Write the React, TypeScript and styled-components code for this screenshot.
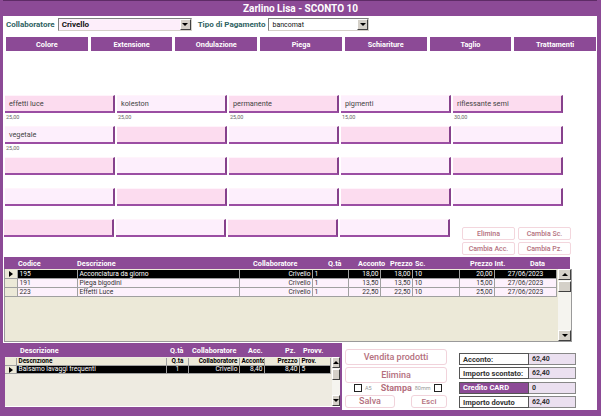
import React from 'react';
import styled, { createGlobalStyle } from 'styled-components';

const PURPLE = '#8c4a96';
const ROSE = '#b4707e';
const BEIGE = '#ece9d8';

const GlobalStyle = createGlobalStyle`
  html, body { margin: 0; padding: 0; background: #fff; }
  body { font-family: Roboto, "Liberation Sans", Arial, sans-serif; }
  * { box-sizing: border-box; }
`;

const Window = styled.div`
  width: 601px;
  height: 416px;
  display: flex;
  flex-direction: column;
  background: #fff;
  border: solid ${PURPLE};
  border-width: 0 4px 6px 3px;
  overflow: hidden;
`;

const TitleBar = styled.div`
  height: 16px;
  margin: 0 -4px 0 -3px;
  background: ${PURPLE};
  border-top: 1px solid #5e2b66;
  color: #fff;
  font-size: 10px;
  font-weight: 700;
  display: flex;
  align-items: center;
  justify-content: center;
`;

const FieldRow = styled.div`
  display: flex;
  align-items: center;
  height: 15px;
  margin-top: 1px;
  padding-left: 3px;
`;

const FieldLabel = styled.span<{ $gap?: number }>`
  font-size: 8px;
  font-weight: 700;
  color: #2f6262;
  margin-left: ${(p) => p.$gap ?? 0}px;
  margin-right: 3px;
`;

const Combo = styled.div<{ $w: number; $bg: string; $bold?: boolean }>`
  width: ${(p) => p.$w}px;
  height: 13px;
  display: flex;
  align-items: center;
  justify-content: space-between;
  background: ${(p) => p.$bg};
  border: 1px solid;
  border-color: #7f7f7f #d4d0c8 #d4d0c8 #7f7f7f;
  padding-left: 3px;
  font-size: ${(p) => (p.$bold ? 8 : 7)}px;
  font-weight: ${(p) => (p.$bold ? 700 : 400)};
  color: #111;
`;

const ComboArrow = styled.span`
  width: 11px;
  height: 11px;
  background: #d4d0c8;
  border: 1px solid;
  border-color: #fff #404040 #404040 #fff;
  display: flex;
  align-items: center;
  justify-content: center;
  &::after {
    content: '';
    border-left: 3px solid transparent;
    border-right: 3px solid transparent;
    border-top: 3px solid #000;
  }
`;

const Tabs = styled.div`
  display: grid;
  grid-template-columns: repeat(7, 1fr);
  column-gap: 3px;
  height: 14px;
  margin-top: 5px;
  padding: 0 1px 0 3px;
`;

const Tab = styled.div`
  background: ${PURPLE};
  color: #fff;
  font-size: 7.3px;
  font-weight: 700;
  display: flex;
  align-items: center;
  justify-content: center;
`;

const ProductGrid = styled.div<{ $cols: number }>`
  display: grid;
  grid-template-columns: repeat(${(p) => p.$cols}, 110px);
  grid-auto-rows: 31px;
  column-gap: 2px;
`;

const ProductCell = styled.div`
  display: flex;
  flex-direction: column;
`;

const ProductButton = styled.div<{ $dark: boolean }>`
  height: 18px;
  background: ${(p) => (p.$dark ? '#fcdcef' : '#fdeffc')};
  border-top: 1px solid #fff4fb;
  border-bottom: 2px solid #9b4ea3;
  border-right: 2px solid #86418c;
  padding-left: 4px;
  font-size: 7.3px;
  color: #444;
  display: flex;
  align-items: center;
`;

const Price = styled.div`
  font-size: 5.5px;
  color: #666;
  margin-top: 1px;
  padding-left: 1px;
`;

const ProductSection = styled.div`
  margin-top: 44px;
  padding-left: 2px;
`;

const LastRow = styled.div`
  display: flex;
  height: 36px;
  margin-left: -1px;
`;

const SmallGrid = styled.div`
  display: grid;
  grid-template-columns: 53px 53px;
  grid-auto-rows: 13px;
  column-gap: 3px;
  row-gap: 2px;
  margin: 8px 0 0 12px;
`;

const SmallButton = styled.div`
  background: #fff;
  border: 1px solid #f3d6dd;
  border-radius: 2px;
  color: ${ROSE};
  font-size: 7px;
  font-weight: 500;
  display: flex;
  align-items: center;
  justify-content: center;
`;

const Table = styled.div`
  margin: 2px 0 0 1px;
  width: 568px;
`;

const TableHead = styled.div<{ $cols: string }>`
  display: grid;
  grid-template-columns: ${(p) => p.$cols};
  height: 12px;
  align-items: center;
  background: ${PURPLE};
  color: #fff;
  font-size: 7.3px;
  font-weight: 700;
`;

const MainHead = styled(TableHead)`
  width: 566px;
`;

const GridBody = styled.div<{ $h: number }>`
  display: flex;
  height: ${(p) => p.$h}px;
  background: ${BEIGE};
  border: 1px solid #9a9a9a;
  border-top: none;
`;

const Rows = styled.div`
  flex: 1;
  padding-top: 1px;
`;

const DataRow = styled.div<{ $cols: string; $h: number; $sel?: boolean; $head?: boolean }>`
  display: grid;
  grid-template-columns: ${(p) => p.$cols};
  height: ${(p) => p.$h}px;
  font-size: ${(p) => (p.$head ? 6.4 : 6.7)}px;
  line-height: ${(p) => p.$h - 1}px;
  font-weight: ${(p) => (p.$head ? 700 : 400)};
  background: ${(p) => (p.$sel ? '#000' : p.$head ? BEIGE : '#fdf1fc')};
  color: ${(p) => (p.$sel ? '#fff' : p.$head ? '#000' : '#333')};
`;

const Cell = styled.div<{ $align?: 'left' | 'right' | 'center' }>`
  border-right: 1px solid #a0a0a0;
  border-bottom: 1px solid #a0a0a0;
  padding: 0 1.5px;
  text-align: ${(p) => p.$align ?? 'left'};
  white-space: nowrap;
  overflow: hidden;
`;

const Selector = styled.div<{ $sel?: boolean }>`
  background: ${BEIGE};
  border-right: 1px solid #a0a0a0;
  border-bottom: 1px solid #a0a0a0;
  display: flex;
  align-items: center;
  justify-content: center;
  &::after {
    content: '';
    display: ${(p) => (p.$sel ? 'block' : 'none')};
    border-top: 3px solid transparent;
    border-bottom: 3px solid transparent;
    border-left: 4px solid #000;
  }
`;

const ScrollBar = styled.div<{ $w: number }>`
  width: ${(p) => p.$w}px;
  margin-left: 1px;
  background: #f5f4ef;
  display: flex;
  flex-direction: column;
  justify-content: space-between;
`;

const ScrollTop = styled.div`
  display: flex;
  flex-direction: column;
  gap: 1px;
`;

const ScrollBtn = styled.div<{ $dir?: 'up' | 'down' }>`
  height: 11px;
  background: #d4d0c8;
  border: 1px solid;
  border-color: #fff #404040 #404040 #fff;
  display: flex;
  align-items: center;
  justify-content: center;
  &::after {
    content: '';
    display: ${(p) => (p.$dir ? 'block' : 'none')};
    border-left: 3px solid transparent;
    border-right: 3px solid transparent;
    ${(p) => (p.$dir === 'up' ? 'border-bottom: 3px solid #000;' : 'border-top: 3px solid #000;')}
  }
`;

const Bottom = styled.div`
  display: flex;
  height: 67px;
  margin-top: 1px;
`;

const SubForm = styled.div`
  width: 339px;
  background: ${PURPLE};
  display: flex;
  flex-direction: column;
  padding: 0 2px 3px;
`;

const SubHead = styled(TableHead)`
  height: 14px;
  background: transparent;
`;

const SubBody = styled(GridBody)`
  flex: 1;
  background: #eeebe1;
  border: none;
  border-bottom: 1px solid #fff;
`;

const Actions = styled.div`
  width: 102px;
  margin-left: 3px;
  padding-top: 6px;
  display: flex;
  flex-direction: column;
`;

const ActionButton = styled.div<{ $h?: number; $w?: number; $size?: number }>`
  height: ${(p) => p.$h ?? 17}px;
  width: ${(p) => (p.$w ? `${p.$w}px` : 'auto')};
  margin-bottom: 2px;
  background: #fff;
  border: 1px solid #f1d3db;
  border-radius: 3px;
  color: ${ROSE};
  font-size: ${(p) => p.$size ?? 9}px;
  font-weight: 500;
  display: flex;
  align-items: center;
  justify-content: center;
`;

const PrintRow = styled.div`
  display: flex;
  align-items: center;
  height: 12px;
  padding-left: 9px;
  margin-top: -2px;
`;

const CheckBox = styled.span<{ $gap?: number }>`
  width: 8px;
  height: 8px;
  margin-left: ${(p) => p.$gap ?? 0}px;
  border: 1px solid #222;
  background: #fff;
`;

const Tiny = styled.span<{ $gap: number }>`
  font-size: 5.5px;
  color: #999;
  margin-left: ${(p) => p.$gap}px;
`;

const PrintLabel = styled.span`
  font-size: 9px;
  font-weight: 700;
  color: ${ROSE};
  margin: 0 3px 0 9px;
`;

const ActionPair = styled.div`
  display: flex;
  justify-content: space-between;
  margin-top: 1px;
`;

const Summary = styled.div`
  display: grid;
  grid-template-columns: 70px 47px;
  grid-auto-rows: 12px;
  row-gap: 2.4px;
  margin: 10px 0 0 12px;
  align-content: start;
`;

const SumLabel = styled.div<{ $accent?: boolean }>`
  border: 1px solid #555;
  background: ${(p) => (p.$accent ? PURPLE : '#fff')};
  color: ${(p) => (p.$accent ? '#fff' : '#333')};
  font-size: 7.5px;
  font-weight: 700;
  padding-left: 3px;
  display: flex;
  align-items: center;
`;

const SumValue = styled.div`
  border: 1px solid #888;
  border-left: none;
  background: #ebe0f0;
  color: #333;
  font-size: 7px;
  font-weight: 700;
  padding-left: 3px;
  display: flex;
  align-items: center;
`;

const tabs = ['Colore', 'Extensione', 'Ondulazione', 'Piega', 'Schiariture', 'Taglio', 'Trattamenti'];

const products: { name: string; price: string }[] = [
  { name: 'effetti luce', price: '25,00' },
  { name: 'koleston', price: '25,00' },
  { name: 'permanente', price: '25,00' },
  { name: 'pigmenti', price: '15,00' },
  { name: 'riflessante semi', price: '30,00' },
  { name: 'vegetale', price: '25,00' },
  ...Array.from({ length: 14 }, () => ({ name: '', price: '' })),
];

const mainHeadCols = '14px 59px 176px 75px 30px 32px 25px 55px 60px 1fr';
const mainHead = ['', 'Codice', 'Descrizione', 'Collaboratore', 'Q.tà', 'Acconto', 'Prezzo', 'Sc.', 'Prezzo Int.', 'Data'];
const mainCols = '13px 60px 162px 73px 36px 32px 32px 47px 35px 62px';

const services = [
  { code: '195', desc: 'Acconciatura da giorno', coll: 'Crivello', qty: '1', acc: '18,00', pz: '18,00', sc: '10', full: '20,00', date: '27/06/2023' },
  { code: '191', desc: 'Piega bigodini', coll: 'Crivello', qty: '1', acc: '13,50', pz: '13,50', sc: '10', full: '15,00', date: '27/06/2023' },
  { code: '223', desc: 'Effetti Luce', coll: 'Crivello', qty: '1', acc: '22,50', pz: '22,50', sc: '10', full: '25,00', date: '27/06/2023' },
];

const subHeadCols = '15px 150px 22px 56px 37px 18px 1fr';
const subHead = ['', 'Descrizione', 'Q.tà', 'Collaboratore', 'Acc.', 'Pz.', 'Provv.'];
const subCols = '12px 150px 22px 51px 25px 35px 31px';

const totals = [
  { label: 'Acconto:', value: '62,40' },
  { label: 'Importo scontato:', value: '62,40' },
  { label: 'Credito CARD', value: '0', accent: true },
  { label: 'Importo dovuto', value: '62,40' },
];

export default function App() {
  return (
    <>
      <GlobalStyle />
      <Window>
        <TitleBar>Zarlino Lisa - SCONTO 10</TitleBar>

        <FieldRow>
          <FieldLabel>Collaboratore</FieldLabel>
          <Combo $w={134} $bg="#fdeefa" $bold>
            Crivello
            <ComboArrow />
          </Combo>
          <FieldLabel $gap={6}>Tipo di Pagamento</FieldLabel>
          <Combo $w={101} $bg="#fff">
            bancomat
            <ComboArrow />
          </Combo>
        </FieldRow>

        <Tabs>
          {tabs.map((t) => (
            <Tab key={t}>{t}</Tab>
          ))}
        </Tabs>

        <ProductSection>
          <ProductGrid $cols={5}>
            {products.map((p, i) => (
              <ProductCell key={i}>
                <ProductButton $dark={(Math.floor(i / 5) + (i % 5)) % 2 === 0}>{p.name}</ProductButton>
                <Price>{p.price}</Price>
              </ProductCell>
            ))}
          </ProductGrid>
          <LastRow>
            <ProductGrid $cols={4}>
              {[0, 1, 2, 3].map((c) => (
                <ProductCell key={c}>
                  <ProductButton $dark={c % 2 === 0} />
                </ProductCell>
              ))}
            </ProductGrid>
            <SmallGrid>
              <SmallButton>Elimina</SmallButton>
              <SmallButton>Cambia Sc.</SmallButton>
              <SmallButton>Cambia Acc.</SmallButton>
              <SmallButton>Cambia Pz.</SmallButton>
            </SmallGrid>
          </LastRow>
        </ProductSection>

        <Table>
          <MainHead $cols={mainHeadCols}>
            {mainHead.map((h, i) => (
              <span key={i}>{h}</span>
            ))}
          </MainHead>
          <GridBody $h={73}>
            <Rows>
              {services.map((s, i) => (
                <DataRow key={s.code} $cols={mainCols} $h={9} $sel={i === 0}>
                  <Selector $sel={i === 0} />
                  <Cell>{s.code}</Cell>
                  <Cell>{s.desc}</Cell>
                  <Cell $align="right">{s.coll}</Cell>
                  <Cell>{s.qty}</Cell>
                  <Cell $align="right">{s.acc}</Cell>
                  <Cell $align="right">{s.pz}</Cell>
                  <Cell>{s.sc}</Cell>
                  <Cell $align="right">{s.full}</Cell>
                  <Cell $align="center">{s.date}</Cell>
                </DataRow>
              ))}
            </Rows>
            <ScrollBar $w={13}>
              <ScrollTop>
                <ScrollBtn $dir="up" />
                <ScrollBtn />
              </ScrollTop>
              <ScrollBtn $dir="down" />
            </ScrollBar>
          </GridBody>
        </Table>

        <Bottom>
          <SubForm>
            <SubHead $cols={subHeadCols}>
              {subHead.map((h, i) => (
                <span key={i}>{h}</span>
              ))}
            </SubHead>
            <SubBody $h={50}>
              <Rows>
                <DataRow $cols={subCols} $h={8} $head>
                  <Selector />
                  <Cell>Descrizione</Cell>
                  <Cell $align="center">Q.tà</Cell>
                  <Cell $align="right">Collaboratore</Cell>
                  <Cell $align="right">Acconto</Cell>
                  <Cell $align="right">Prezzo</Cell>
                  <Cell>Prov.</Cell>
                </DataRow>
                <DataRow $cols={subCols} $h={8} $sel>
                  <Selector $sel />
                  <Cell>Balsamo lavaggi frequenti</Cell>
                  <Cell $align="center">1</Cell>
                  <Cell $align="right">Crivello</Cell>
                  <Cell $align="right">8,40</Cell>
                  <Cell $align="right">8,40</Cell>
                  <Cell>5</Cell>
                </DataRow>
              </Rows>
              <ScrollBar $w={9}>
                <ScrollTop>
                  <ScrollBtn $dir="up" />
                  <ScrollBtn />
                </ScrollTop>
                <ScrollBtn $dir="down" />
              </ScrollBar>
            </SubBody>
          </SubForm>

          <Actions>
            <ActionButton>Vendita prodotti</ActionButton>
            <ActionButton>Elimina</ActionButton>
            <PrintRow>
              <CheckBox />
              <Tiny $gap={3}>A5</Tiny>
              <PrintLabel>Stampa</PrintLabel>
              <Tiny $gap={0}>80mm</Tiny>
              <CheckBox $gap={3} />
            </PrintRow>
            <ActionPair>
              <ActionButton $h={13} $w={50}>Salva</ActionButton>
              <ActionButton $h={13} $w={36} $size={8}>Esci</ActionButton>
            </ActionPair>
          </Actions>

          <Summary>
            {totals.map((t) => (
              <React.Fragment key={t.label}>
                <SumLabel $accent={t.accent}>{t.label}</SumLabel>
                <SumValue>{t.value}</SumValue>
              </React.Fragment>
            ))}
          </Summary>
        </Bottom>
      </Window>
    </>
  );
}
